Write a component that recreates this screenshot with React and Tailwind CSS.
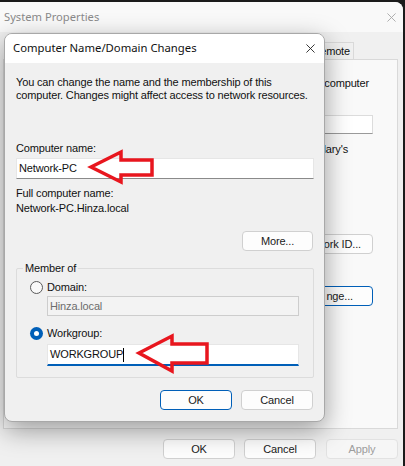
import React from "react";

const body = "font-['Liberation_Sans',Arial,sans-serif]";
const title = "font-['Noto_Sans','Liberation_Sans',sans-serif]";

function Btn({ children, className = "", blue = false, disabled = false }) {
  return (
    <div
      className={`flex items-center rounded-[4px] border text-[11px] tracking-[-0.15px] leading-none ${
        blue ? "border-[#005fb8] bg-[#fdfdfd]" : disabled ? "border-[#e2e2e2] bg-[#f6f6f6]" : "border-[#d0d0d0] bg-[#fdfdfd]"
      } ${disabled ? "text-[#9d9d9d]" : "text-[#1a1a1a]"} ${className}`}
    >
      {children}
    </div>
  );
}

function XIcon({ className, color }) {
  return (
    <svg className={className} viewBox="0 0 10 10" fill="none">
      <path d="M0.5 0.5L9.5 9.5M9.5 0.5L0.5 9.5" stroke={color} strokeWidth="1" />
    </svg>
  );
}

export default function App() {
  return (
    <div className={`relative w-[405px] h-[466px] overflow-hidden bg-[#1b1b1b] pt-[2px] ${body}`}>
      {/* Background window: System Properties */}
      <div className="w-[403px] h-[464px] rounded-tr-[8px] bg-[#f0f0f0] flex flex-col overflow-hidden">
        <div className="h-[30px] bg-[#f9f9f9] flex items-center justify-between pl-[4px] pr-[7px] shrink-0">
          <span className={`${title} text-[11.2px] text-[#8a8a8a]`}>System Properties</span>
          <XIcon className="w-[9px] h-[9px]" color="#a6a6a6" />
        </div>
        {/* tabs */}
        <div className="h-[27px] flex items-end justify-end pr-[49px] shrink-0">
          <div className="h-[17px] w-[110px] border border-b-0 border-[#d9d9d9] bg-[#f0f0f0] flex items-center justify-end pr-[3px] text-[11px] tracking-[-0.15px] text-[#111]">
            emote
          </div>
        </div>
        {/* panel (partly hidden behind the dialog) */}
        <div className="ml-[3px] w-[395px] h-[370px] border border-[#d9d9d9] bg-[#f9f9f9] flex flex-col items-end pr-[24px] shrink-0 text-[11px] tracking-[-0.15px]">
          <div className="mt-[17px] pr-[4px] h-[13px] leading-[13px] whitespace-nowrap text-[#111]">computer</div>
          <div className="mt-[25px] w-[250px] h-[19px] bg-white border border-[#dcdcdc] border-b-[#9a9a9a]"></div>
          <div className="mt-[9px] pr-[25px] h-[13px] leading-[13px] whitespace-nowrap text-[#111]">lary's</div>
          <Btn className="mt-[78px] w-[86px] h-[20px] justify-end pr-[11px]">ork ID...</Btn>
          <Btn blue className="mt-[32px] w-[86px] h-[20px] justify-end pr-[19px]">nge...</Btn>
        </div>
        {/* bottom buttons */}
        <div className="mt-[10px] flex justify-end gap-[9px] pr-[5px]">
          <Btn className="w-[72px] h-[20px] justify-center">OK</Btn>
          <Btn className="w-[72px] h-[20px] justify-center">Cancel</Btn>
          <Btn disabled className="w-[72px] h-[20px] ml-px justify-center">Apply</Btn>
        </div>
      </div>

      {/* Dialog: Computer Name/Domain Changes */}
      <div className="absolute left-[4px] top-[33px] w-[321px] h-[389px] rounded-[8px] border border-[#a8a8a8] bg-[#f0f0f0] overflow-hidden shadow-[0_8px_26px_rgba(0,0,0,0.38)] flex flex-col">
        <div className="h-[29px] bg-white flex items-center justify-between pl-[8px] pr-[9px] shrink-0">
          <span className={`${title} text-[11.3px] text-[#111]`}>Computer Name/Domain Changes</span>
          <XIcon className="w-[9px] h-[9px]" color="#222" />
        </div>
        <div className="flex flex-col px-[10px] text-[11px] tracking-[-0.15px] leading-[13px] text-[#111]">
          <div className="mt-[13px] pl-px whitespace-nowrap">
            You can change the name and the membership of this
            <br />
            computer. Changes might affect access to network resources.
          </div>
          <div className="mt-[40px] pl-px">Computer name:</div>
          <div className="mt-[3px] ml-[1px] h-[21px] bg-white border border-[#e6e6e6] border-b-[#8a8a8a] flex items-center pl-[2px]">
            Network-PC
          </div>
          <div className="mt-[8px] pl-px">Full computer name:</div>
          <div className="mt-[2px] pl-px">Network-PC.Hinza.local</div>
          <Btn className="self-end mt-[16px] w-[71px] h-[20px] mr-px justify-center">More...</Btn>

          {/* group box */}
          <div className="relative mt-[17px] ml-[1px] h-[110px] border border-[#dcdcdc] rounded-[2px]">
            <div className="absolute left-[6px] top-[-7px] px-[2px] bg-[#f0f0f0] leading-[13px]">Member of</div>
            <div className="flex flex-col pl-[13px] pr-[14px]">
              <div className="mt-[12px] flex items-center h-[13px]">
                <div className="w-[13px] h-[13px] rounded-full border border-[#5a5a5a] bg-[#f9f9f9]"></div>
                <span className="ml-[4px]">Domain:</span>
              </div>
              <div className="mt-[2px] ml-[17px] h-[20px] bg-[#f3f3f3] border border-[#cdcdcd] flex items-center pl-[2px] text-[#6d6d6d]">
                Hinza.local
              </div>
              <div className="mt-[11px] flex items-center h-[13px]">
                <div className="w-[13px] h-[13px] rounded-full bg-[#005fb8] flex items-center justify-center">
                  <div className="w-[5px] h-[5px] rounded-full bg-white"></div>
                </div>
                <span className="ml-[4px]">Workgroup:</span>
              </div>
              <div className="mt-[4px] ml-[17px] h-[22px] bg-white border border-[#e6e6e6] border-b-2 border-b-[#005fb8] flex items-center pl-[2px]">
                WORKGROUP
                <span className="inline-block w-px h-[14px] bg-black"></span>
              </div>
            </div>
          </div>

          <div className="mt-[12px] flex justify-end gap-[9px] mr-px">
            <Btn blue className="w-[72px] h-[20px] justify-center">OK</Btn>
            <Btn className="w-[72px] h-[20px] justify-center">Cancel</Btn>
          </div>
        </div>
      </div>

      {/* red arrows annotation */}
      <svg className="absolute left-0 top-0 pointer-events-none" width="405" height="466" viewBox="0 0 405 466">
        <polygon
          points="91,167 121,152 121,160 152,160 152,175 121,175 121,182"
          fill="none"
          stroke="#e8161e"
          strokeWidth="3.5"
          strokeLinejoin="miter"
        />
        <polygon
          points="139,353 172,336 172,344 207,344 207,363 172,363 172,371"
          fill="none"
          stroke="#e8161e"
          strokeWidth="3.5"
          strokeLinejoin="miter"
        />
      </svg>
    </div>
  );
}
